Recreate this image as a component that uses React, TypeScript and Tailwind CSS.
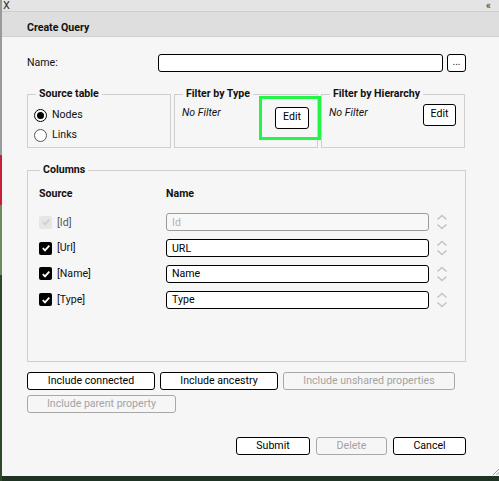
import React from "react";

function Spinner() {
	return (
		<svg width="14" height="18" viewBox="0 0 14 18" fill="none" stroke="#c4c4c4" strokeWidth="1.6">
			<path d="M2.5 6.5 L7 2.5 L11.5 6.5" />
			<path d="M2.5 11.5 L7 15.5 L11.5 11.5" />
		</svg>
	);
}

function Check({ disabled }: { disabled?: boolean }) {
	return (
		<span
			className={`w-[13px] h-[13px] rounded-[2px] flex items-center justify-center shrink-0 ${
				disabled ? "bg-[#e6e6e6]" : "bg-black"
			}`}>
			<svg width="10" height="10" viewBox="0 0 10 10" fill="none" stroke={disabled ? "#cfcfcf" : "#fff"} strokeWidth="1.8">
				<path d="M1.8 5.2 L4 7.4 L8.3 2.6" />
			</svg>
		</span>
	);
}

function Btn({ children, disabled, className = "" }: { children: React.ReactNode; disabled?: boolean; className?: string }) {
	return (
		<button
			className={`h-[18px] rounded-[3px] border text-[10.6px] leading-none flex items-center justify-center shrink-0 ${
				disabled ? "border-[#a8a8a8] text-[#a3a3a3]" : "border-black text-black bg-white"
			} ${className}`}>
			{children}
		</button>
	);
}

function Fieldset({ title, className = "", children }: { title: string; className?: string; children: React.ReactNode }) {
	return (
		<fieldset className={`border border-[#cfcfcf] px-[7px] shrink-0 ${className}`}>
			<legend className="px-[3px] ml-[1px] text-[10.6px] font-bold leading-none">{title}</legend>
			{children}
		</fieldset>
	);
}

const rows = [
	{ src: "[Id]", name: "Id", disabled: true },
	{ src: "[Url]", name: "URL" },
	{ src: "[Name]", name: "Name" },
	{ src: "[Type]", name: "Type" },
];

export default function App() {
	return (
		<div className="w-[499px] h-[481px] flex bg-[#1f3323] overflow-hidden" style={{ fontFamily: "Roboto, 'Liberation Sans', sans-serif" }}>
			<div className="w-[2px] flex flex-col shrink-0">
				<div className="h-[155px] bg-[#9a9a9a]" />
				<div className="h-[50px] bg-[#c81e3c]" />
				<div className="h-[70px] bg-[#6c8a5c]" />
				<div className="flex-1 bg-[#2f4a2a]" />
			</div>
			<div className="flex-1 flex flex-col h-[476px] text-[#111]">
				<div className="h-[12px] shrink-0 bg-[#e4e4e4] border-b border-[#cdcdcd] flex items-center justify-between pl-[1px] pr-[10px] text-[11px] leading-[11px] text-[#333]">
					<span>X</span>
					<span>«</span>
				</div>
				<div className="h-[25px] shrink-0 bg-[#dedede] border-b border-[#cfcfcf] flex items-center pt-[8px] pl-[25px] text-[10.6px] font-bold">
					Create Query
				</div>
				<div className="relative flex-1 bg-[#f6f6f6] pl-[25px] pr-[35px] pt-[17px] flex flex-col text-[10.6px]">
					<div className="flex items-center h-[18px] shrink-0">
						<span className="w-[131px]">Name:</span>
						<input className="w-[285px] h-[18px] rounded-[3px] border border-black bg-white" />
						<button className="ml-[4px] w-[19px] h-[18px] rounded-[3px] border border-black bg-white text-[10px] leading-none pb-[3px]">...</button>
					</div>

					<div className="flex gap-[3px] mt-[17px] h-[59px] shrink-0">
						<Fieldset title="Source table" className="w-[144px]">
							<div className="flex flex-col gap-[5px] mt-[8px] -ml-[1px]">
								<label className="flex items-center gap-[5px] h-[15px]">
									<span className="w-[13px] h-[13px] rounded-full border border-black bg-white flex items-center justify-center">
										<span className="w-[7px] h-[7px] rounded-full bg-black" />
									</span>
									Nodes
								</label>
								<label className="flex items-center gap-[5px] h-[15px]">
									<span className="w-[13px] h-[13px] rounded-full border border-[#555] bg-white" />
									Links
								</label>
							</div>
						</Fieldset>
						<Fieldset title="Filter by Type" className="w-[144px]">
							<div className="flex justify-between items-start">
								<i className="mt-[5px]">No Filter</i>
								<div className="border-[3px] border-[#22f548] mt-[-4px] mr-[-11px] w-[62px] h-[44px] flex justify-end pt-[8px] pr-[9px]">
									<Btn className="w-[34px] h-[22px]">Edit</Btn>
								</div>
							</div>
						</Fieldset>
						<Fieldset title="Filter by Hierarchy" className="w-[144px]">
							<div className="flex justify-between items-start">
								<i className="mt-[5px]">No Filter</i>
								<Btn className="w-[33px] h-[22px] mt-[4px] mr-[1px]">Edit</Btn>
							</div>
						</Fieldset>
					</div>

					<Fieldset title="Columns" className="mt-[17px] h-[197px] pl-[11px]">
						<div className="flex font-bold mt-[10px]">
							<span className="w-[127px]">Source</span>
							<span>Name</span>
						</div>
						<div className="flex flex-col gap-[7.7px] mt-[12px]">
							{rows.map((r) => (
								<div key={r.src} className="flex items-center h-[18px]">
									<div className={`w-[127px] flex items-center gap-[5px] ${r.disabled ? "text-[#555]" : ""}`}>
										<Check disabled={r.disabled} />
										{r.src}
									</div>
									<input
										readOnly
										value={r.name}
										className={`w-[263px] h-[18px] rounded-[3px] border px-[5px] text-[10.6px] ${
											r.disabled ? "border-[#9a9a9a] bg-[#f8f8f8] text-[#b0b0b0]" : "border-black bg-white text-black"
										}`}
									/>
									<span className="ml-[6px]">
										<Spinner />
									</span>
								</div>
							))}
						</div>
					</Fieldset>

					<div className="flex gap-[5px] mt-[10px] shrink-0">
						<Btn className="w-[128px]">Include connected</Btn>
						<Btn className="w-[118px]">Include ancestry</Btn>
						<Btn disabled className="w-[172px]">Include unshared properties</Btn>
					</div>
					<div className="flex mt-[5px] shrink-0">
						<Btn disabled className="w-[149px]">Include parent property</Btn>
					</div>

					<div className="flex justify-end gap-[6px] mt-[24px] shrink-0">
						<Btn className="w-[74px]">Submit</Btn>
						<Btn disabled className="w-[71px]">Delete</Btn>
						<Btn className="w-[73px]">Cancel</Btn>
					</div>

					<svg className="absolute right-[1px] bottom-[1px]" width="8" height="8" viewBox="0 0 8 8" stroke="#9a9a9a" strokeWidth="1">
						<path d="M1 8 L8 1 M4.5 8 L8 4.5" />
					</svg>
				</div>
			</div>
		</div>
	);
}
